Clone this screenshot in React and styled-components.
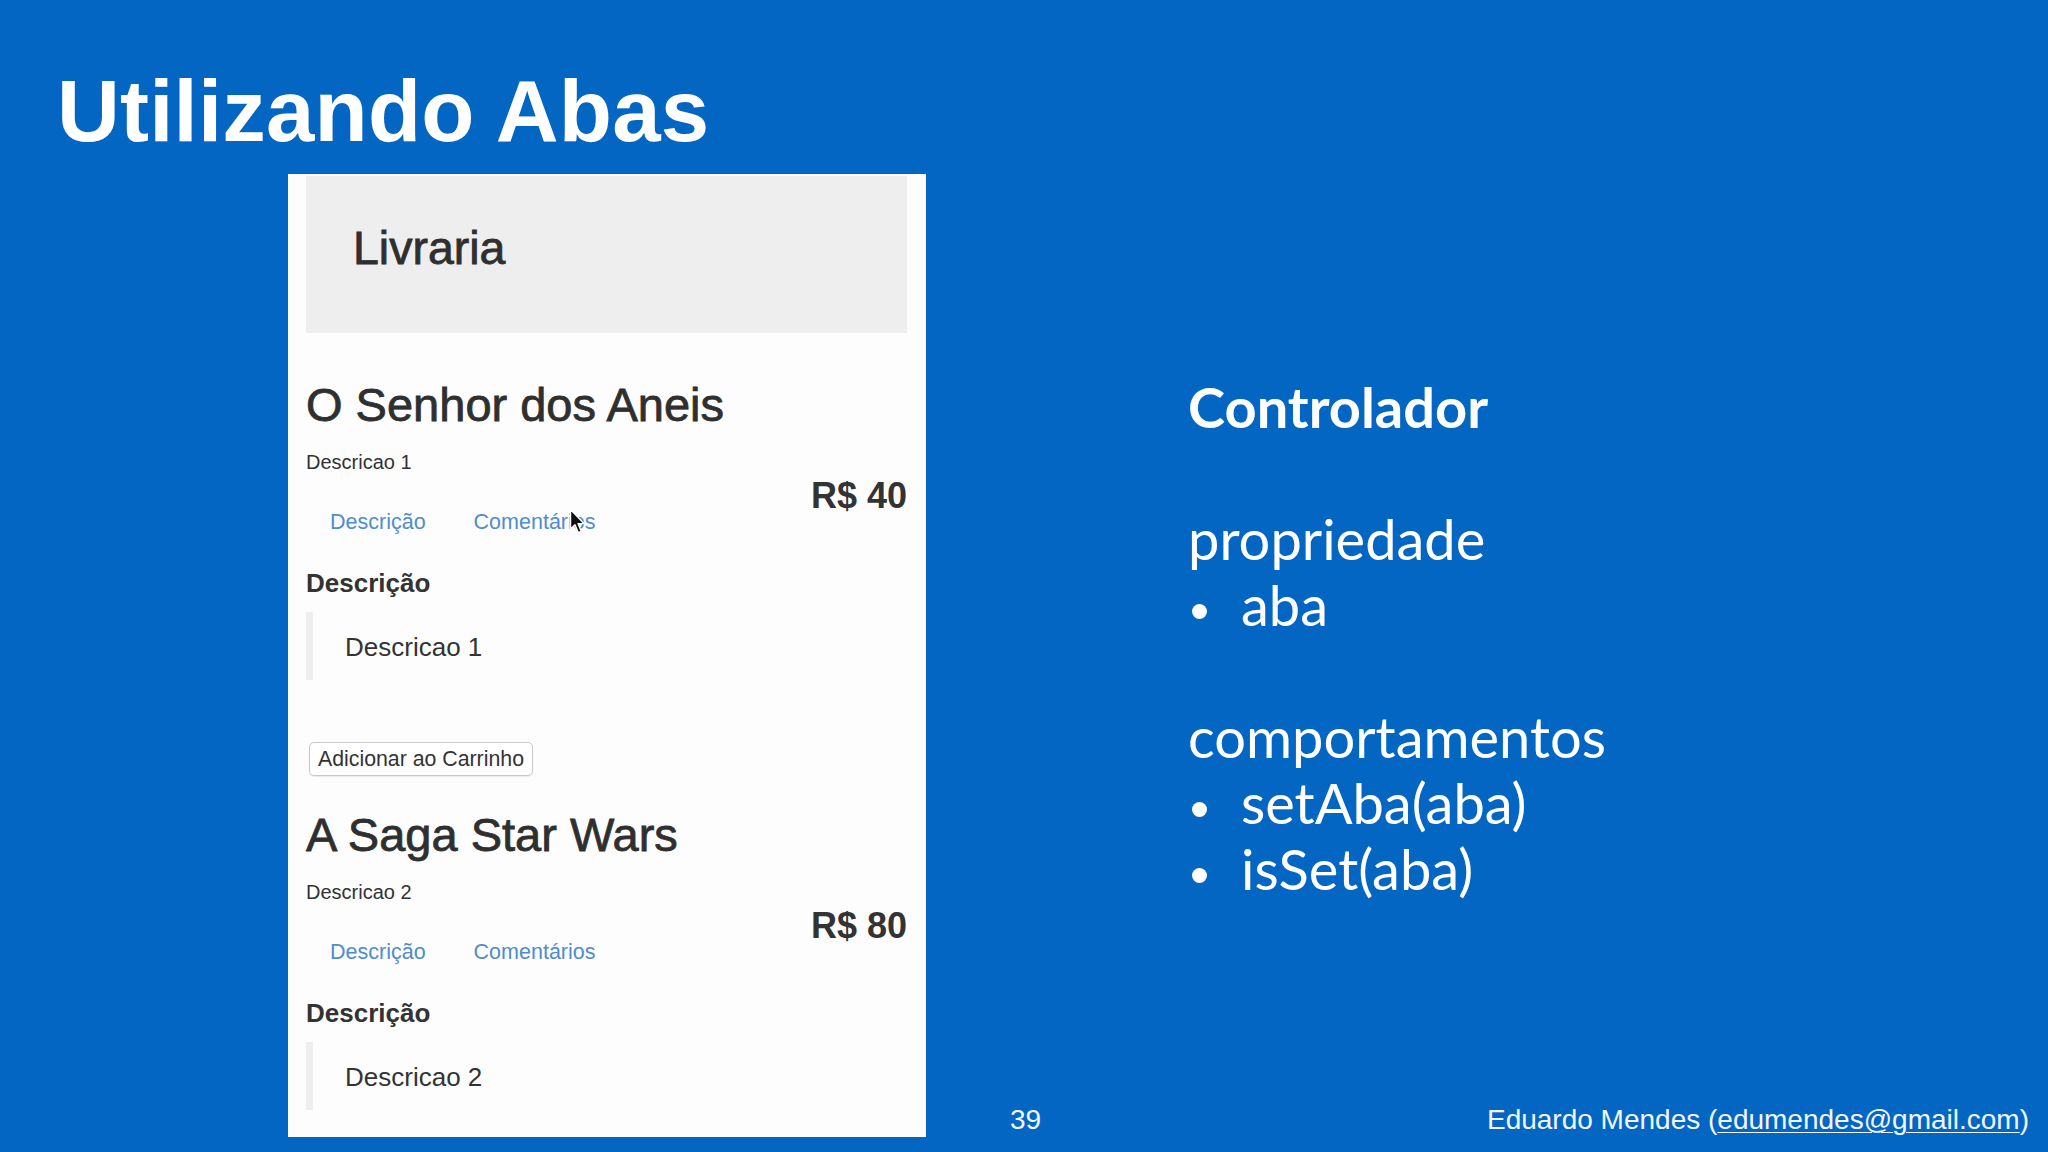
import styled, { createGlobalStyle } from "styled-components";

const GlobalStyle = createGlobalStyle`
  html, body {
    margin: 0;
    padding: 0;
    background: #0366c3;
  }
  * {
    box-sizing: border-box;
  }
`;

const products = [
  { id: 1, name: "O Senhor dos Aneis", desc: "Descricao 1", price: 40, cursor: true },
  { id: 2, name: "A Saga Star Wars", desc: "Descricao 2", price: 80 },
];

function Cursor() {
  return (
    <CursorMark width="18" height="27" viewBox="0 0 18 27">
      <path
        d="M1.5 1.5 L1.5 21 L6 16.8 L9.2 24.6 L12.2 23.3 L9 15.6 L15 15.6 Z"
        fill="#111"
        stroke="#fff"
        strokeWidth="1.4"
        strokeLinejoin="round"
      />
    </CursorMark>
  );
}

function Product({ item, last }) {
  return (
    <ProductBlock>
      <ProductName>{item.name}</ProductName>
      <ProductDesc>{item.desc}</ProductDesc>
      <TabRow>
        <Tabs>
          <Tab>Descrição</Tab>
          <Tab>
            Comentários
            {item.cursor && <Cursor />}
          </Tab>
        </Tabs>
        <Price>R$ {item.price}</Price>
      </TabRow>
      <TabTitle>Descrição</TabTitle>
      <Quote>{item.desc}</Quote>
      {/* the screenshot is cut just under the last quote */}
      {!last && <CartButton>Adicionar ao Carrinho</CartButton>}
    </ProductBlock>
  );
}

function App() {
  return (
    <>
      <GlobalStyle />
      <Slide>
        <SlideTitle>Utilizando Abas</SlideTitle>
        <SlideBody>
          <Shot>
            <Jumbotron>
              <StoreName>Livraria</StoreName>
            </Jumbotron>
            {products.map((item, i) => (
              <Product key={item.id} item={item} last={i === products.length - 1} />
            ))}
          </Shot>
          <RightCol>
            <Notes>
              <NoteHead>Controlador</NoteHead>
              <Blank />
              <NoteLine>propriedade</NoteLine>
              <Bullet>aba</Bullet>
              <Blank />
              <NoteLine>comportamentos</NoteLine>
              <Bullet>setAba(aba)</Bullet>
              <Bullet>isSet(aba)</Bullet>
            </Notes>
            <Footer>
              <span>39</span>
              <span>
                Eduardo Mendes (<Mail>edumendes@gmail.com</Mail>)
              </span>
            </Footer>
          </RightCol>
        </SlideBody>
      </Slide>
    </>
  );
}

const Slide = styled.div`
  width: 2048px;
  height: 1152px;
  background: #0366c3;
  overflow: hidden;
  display: flex;
  flex-direction: column;
`;

const SlideTitle = styled.h1`
  margin: 0;
  padding: 68px 0 0 57px;
  font-family: "Liberation Sans", Arial, sans-serif;
  font-weight: 700;
  font-size: 87px;
  line-height: 86px;
  color: #fff;
  letter-spacing: 0.2px;
`;

const SlideBody = styled.div`
  display: flex;
  margin-top: 20px;
  height: 963px;
`;

const Shot = styled.div`
  width: 638px;
  height: 963px;
  margin-left: 288px;
  padding: 2px 19px 0 18px;
  background: #fdfdfd;
  overflow: hidden;
  font-family: "Liberation Sans", Arial, sans-serif;
  color: #333;
`;

const Jumbotron = styled.div`
  height: 157px;
  background: #eeeeee;
  padding: 46px 0 0 47px;
`;

const StoreName = styled.div`
  font-size: 46.5px;
  line-height: 52px;
  color: #2f2f2f;
  -webkit-text-stroke: 0.8px #2f2f2f;
`;

const ProductBlock = styled.div`
  padding-top: 46px;
  & + & {
    padding-top: 33px;
  }
`;

const ProductName = styled.div`
  font-size: 47px;
  line-height: 52px;
  color: #2f2f2f;
  -webkit-text-stroke: 0.8px #2f2f2f;
`;

const ProductDesc = styled.div`
  margin-top: 19px;
  font-size: 20px;
  line-height: 24px;
`;

const TabRow = styled.div`
  display: flex;
  justify-content: space-between;
  align-items: flex-start;
`;

const Tabs = styled.div`
  display: flex;
  gap: 6px;
  margin: 22px 0 0 3px;
`;

const Tab = styled.div`
  position: relative;
  padding: 14px 21px;
  font-size: 21.5px;
  line-height: 24px;
  color: #4e8dcf;
`;

const CursorMark = styled.svg`
  position: absolute;
  left: 116px;
  top: 12px;
`;

const Price = styled.div`
  margin-top: 2px;
  font-size: 36px;
  line-height: 40px;
  font-weight: 700;
  color: #333;
`;

const TabTitle = styled.div`
  margin-top: 20px;
  font-size: 26px;
  line-height: 30px;
  font-weight: 700;
  color: #333;
`;

const Quote = styled.div`
  margin-top: 14px;
  padding: 20px 0 18px 32px;
  border-left: 7px solid #eeeeee;
  font-size: 26px;
  line-height: 30px;
`;

const CartButton = styled.div`
  display: inline-flex;
  align-items: center;
  margin: 62px 0 0 3px;
  height: 34px;
  padding: 0 8px;
  border: 1px solid #c9c9c9;
  border-radius: 5px;
  background: #fff;
  box-shadow: 0 1px 1px rgba(0, 0, 0, 0.08);
  font-size: 21.3px;
  color: #333;
`;

const RightCol = styled.div`
  flex: 1;
  display: flex;
  flex-direction: column;
`;

const Notes = styled.div`
  margin-top: 200px;
  padding-left: 262px;
  font-family: Lato, "Liberation Sans", sans-serif;
  font-size: 56px;
  line-height: 66px;
  color: #fff;
`;

const NoteHead = styled.div`
  font-weight: 700;
`;

const NoteLine = styled.div``;

const Blank = styled.div`
  height: 66px;
`;

const Bullet = styled.div`
  &::before {
    content: "";
    display: inline-block;
    width: 15px;
    height: 15px;
    border-radius: 50%;
    background: #fff;
    margin: 0 34px 0 4px;
    vertical-align: 7px;
  }
`;

const Footer = styled.div`
  margin-top: auto;
  display: flex;
  justify-content: space-between;
  padding: 0 19px 1px 84px;
  font-family: "Liberation Sans", Arial, sans-serif;
  font-size: 28px;
  line-height: 32px;
  color: #f2f6fb;
`;

const Mail = styled.span`
  text-decoration: underline;
  text-underline-offset: 3px;
  text-decoration-thickness: 1px;
`;

export default App;
